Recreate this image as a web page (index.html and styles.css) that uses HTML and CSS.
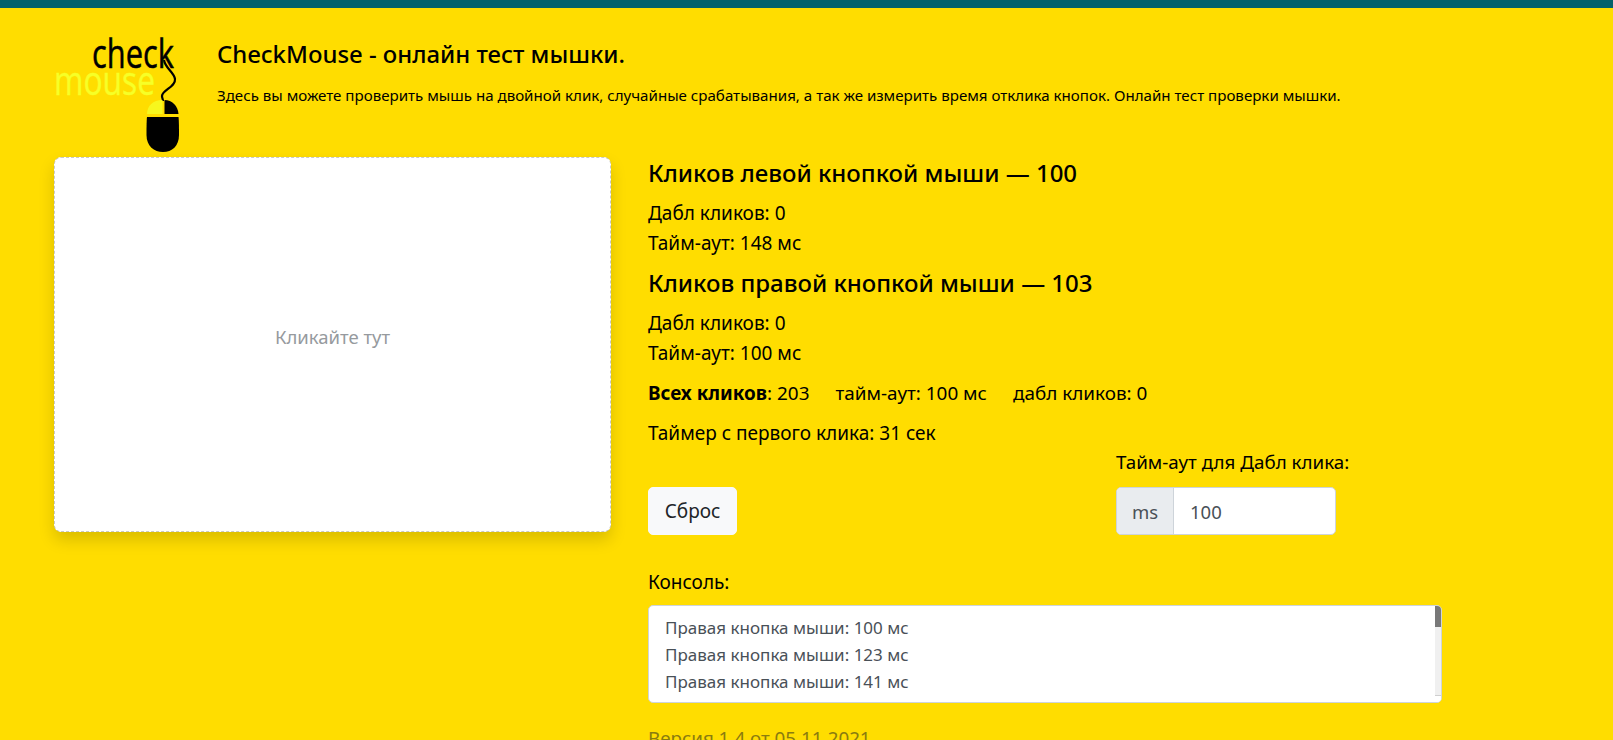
FILE: index.html
```html
<!DOCTYPE html>
<html lang="ru">
<head>
<meta charset="utf-8">
<title>CheckMouse</title>
<link rel="stylesheet" href="styles.css">
</head>
<body>
<div class="topbar"></div>
<div class="page">
  <header class="header">
    <svg class="logo" width="128" height="118" viewBox="0 0 128 118" aria-label="CheckMouse">
      <text class="logo-check" x="38" y="30" textLength="82" lengthAdjust="spacingAndGlyphs">check</text>
      <text class="logo-mouse" x="0" y="57" textLength="101" lengthAdjust="spacingAndGlyphs">mouse</text>
      <path class="cable" d="M110 22 C111 30 120 34 121 41 C122 49 108 52 108 58 C108 60 109 61 109 63" />
      <path class="btn-left" d="M108.500 62 V76 H93 C93 68 99 62 108.500 62 Z" />
      <path class="btn-right" d="M110.500 62 C118 62 124 68 124.500 76 H110.500 Z" />
      <path class="body-mouse" d="M93 79 H124.500 C125 82 125 94 125 97 C125 108 118 114 109 114 C100 114 92.500 108 92.500 97 C92.500 94 92.500 82 93 79 Z" />
    </svg>
    <div class="intro">
      <h1 class="site-title">CheckMouse - онлайн тест мышки.</h1>
      <p class="site-desc">Здесь вы можете проверить мышь на двойной клик, случайные срабатывания, а так же измерить время отклика кнопок. Онлайн тест проверки мышки.</p>
    </div>
  </header>
  <main class="content">
    <div class="click-area">Кликайте тут</div>
    <section class="stats">
      <h2 class="stat-title">Кликов левой кнопкой мыши — 100</h2>
      <div class="stat-line first">Дабл кликов: 0</div>
      <div class="stat-line">Тайм-аут: 148 мс</div>
      <h2 class="stat-title second">Кликов правой кнопкой мыши — 103</h2>
      <div class="stat-line first">Дабл кликов: 0</div>
      <div class="stat-line">Тайм-аут: 100 мс</div>
      <div class="totals"><span><b>Всех кликов</b>: 203</span><span>тайм-аут: 100 мс</span><span>дабл кликов: 0</span></div>
      <div class="timer">Таймер с первого клика: 31 сек</div>
      <div class="controls">
        <button class="reset" type="button">Сброс</button>
        <div class="timeout">
          <label class="timeout-label">Тайм-аут для Дабл клика:</label>
          <div class="input-group"><span class="addon">ms</span><span class="field">100</span></div>
        </div>
      </div>
      <div class="console-label">Консоль:</div>
      <div class="console">
        <div class="console-lines">
          <div>Правая кнопка мыши: 100 мс</div>
          <div>Правая кнопка мыши: 123 мс</div>
          <div>Правая кнопка мыши: 141 мс</div>
        </div>
        <div class="scrollbar"><div class="track"><div class="thumb"></div></div><div class="corner"></div></div>
      </div>
      <div class="version">Версия 1.4 от 05.11.2021</div>
    </section>
  </main>
</div>
</body>
</html>
```
FILE: styles.css
```css
html, body {
  margin: 0;
  height: 100%;
  overflow: hidden;
}
body {
  background: #ffdd00;
  color: #000;
  font-family: "Noto Sans", "Open Sans", sans-serif;
  font-size: 19px;
}
.topbar {
  height: 8px;
  background: #04616a;
}
.page {
  padding: 0 0 0 54px;
}
.header {
  display: flex;
  height: 149px;
}
.logo {
  flex: none;
  margin-top: 30px;
  overflow: visible;
}
.logo-check {
  font-family: "Open Sans", sans-serif;
  font-size: 41px;
  fill: #000;
  stroke: #000;
  stroke-width: .5;
}
.logo-mouse {
  font-family: "Open Sans", sans-serif;
  font-size: 41px;
  fill: #f7ff26;
  stroke: #f7ff26;
  stroke-width: .4;
}
.cable {
  fill: none;
  stroke: #000;
  stroke-width: 2.200;
}
.btn-left { fill: #f7f71e; }
.btn-right, .body-mouse { fill: #000; }
.intro {
  margin-left: 35px;
  padding-top: 31px;
}
.site-title {
  margin: 0;
  font-size: 23.900px;
  font-weight: 500;
  line-height: 30px;
}
.site-desc {
  margin: 16px 0 0;
  font-size: 15.100px;
  line-height: 20px;
}
.content {
  display: flex;
  align-items: flex-start;
}
.click-area {
  flex: none;
  box-sizing: border-box;
  width: 557px;
  height: 375px;
  padding-bottom: 16px;
  display: flex;
  align-items: center;
  justify-content: center;
  background: #fff;
  border: 1px dashed #c9c9c9;
  border-radius: 7px;
  box-shadow: 0 8px 16px rgba(0, 0, 0, .15);
  color: #969a9e;
  font-size: 18.500px;
}
.stats {
  margin-left: 37px;
  width: 794px;
}
.stat-title {
  margin: 0;
  font-size: 24px;
  font-weight: 500;
  line-height: 31px;
}
.stat-title.second { margin-top: 9px; }
.stat-line {
  line-height: 30px;
}
.stat-line.first { margin-top: 10px; }
.totals {
  display: flex;
  gap: 26px;
  margin-top: 10px;
  font-size: 18.900px;
  line-height: 30px;
}
.timer {
  margin-top: 10px;
  line-height: 30px;
}
.controls {
  display: flex;
  align-items: flex-end;
  margin-top: -1px;
}
.reset {
  width: 89px;
  height: 48px;
  padding: 0;
  background: #f8f9fa;
  border: 1px solid #f8f9fa;
  border-radius: 5px;
  color: #212529;
  font: inherit;
}
.timeout {
  margin-left: 379px;
}
.timeout-label {
  display: block;
  font-size: 18.800px;
  line-height: 30px;
  margin-bottom: 10px;
}
.input-group {
  display: flex;
  box-sizing: border-box;
  width: 220px;
  height: 48px;
  background: #fff;
  border: 1px solid #ced4da;
  border-radius: 5px;
  overflow: hidden;
  color: #495057;
  font-size: 18.500px;
  line-height: 48px;
}
.addon {
  box-sizing: border-box;
  width: 57px;
  text-align: center;
  background: #e9ecef;
  border-right: 1px solid #ced4da;
}
.field {
  padding-left: 16px;
}
.console-label {
  margin-top: 32px;
  line-height: 30px;
}
.console {
  box-sizing: border-box;
  display: flex;
  justify-content: space-between;
  height: 98px;
  margin-top: 8px;
  background: #fff;
  border: 1px solid #ced4da;
  border-radius: 5px;
  overflow: hidden;
  color: #495057;
  font-size: 17px;
}
.console-lines {
  padding: 8px 0 0 16px;
  line-height: 27px;
}
.scrollbar {
  display: flex;
  flex-direction: column;
  width: 6px;
}
.track {
  flex: 1;
  background: #f0f0f0;
  border-bottom: 1px solid #cfcfcf;
}
.corner {
  height: 6px;
  background: #fff;
}
.thumb {
  height: 21px;
  background: #787878;
}
.version {
  margin-top: 20px;
  color: #8a7c10;
  font-size: 18.800px;
  line-height: 30px;
}
```
